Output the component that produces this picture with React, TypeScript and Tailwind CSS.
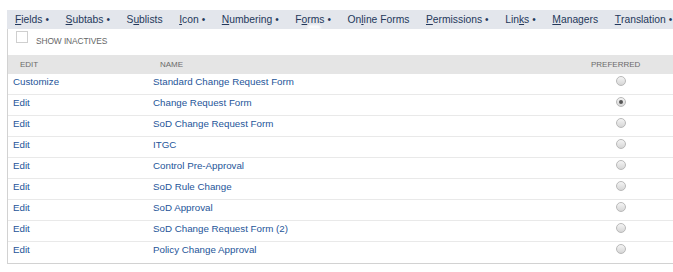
import type { ReactNode } from 'react'

type Tab = {
  label: string
  key: number
  dot: boolean
  active?: boolean
}

const tabs: Tab[] = [
  { label: 'Fields', key: 0, dot: true },
  { label: 'Subtabs', key: 0, dot: true },
  { label: 'Sublists', key: 1, dot: false },
  { label: 'Icon', key: 0, dot: true },
  { label: 'Numbering', key: 0, dot: true },
  { label: 'Forms', key: 1, dot: true, active: true },
  { label: 'Online Forms', key: 2, dot: false },
  { label: 'Permissions', key: 0, dot: true },
  { label: 'Links', key: 3, dot: true },
  { label: 'Managers', key: 0, dot: false },
  { label: 'Translation', key: 0, dot: true },
]

const forms = [
  { action: 'Customize', name: 'Standard Change Request Form', preferred: false },
  { action: 'Edit', name: 'Change Request Form', preferred: true },
  { action: 'Edit', name: 'SoD Change Request Form', preferred: false },
  { action: 'Edit', name: 'ITGC', preferred: false },
  { action: 'Edit', name: 'Control Pre-Approval', preferred: false },
  { action: 'Edit', name: 'SoD Rule Change', preferred: false },
  { action: 'Edit', name: 'SoD Approval', preferred: false },
  { action: 'Edit', name: 'SoD Change Request Form (2)', preferred: false },
  { action: 'Edit', name: 'Policy Change Approval', preferred: false },
]

function TabLabel({ tab }: { tab: Tab }) {
  const before = tab.label.slice(0, tab.key)
  const letter = tab.label.charAt(tab.key)
  const after = tab.label.slice(tab.key + 1)

  return (
    <span className="relative flex h-full items-center whitespace-nowrap">
      {before}
      <span className="underline underline-offset-[1px]">{letter}</span>
      {after}
      {tab.dot && <span className="ml-[3px] text-[10px]">•</span>}
      {tab.active && (
        <span className="absolute bottom-0 left-[12px] h-[4px] w-[14px] rounded-t-full bg-white/90 blur-[1px]" />
      )}
    </span>
  )
}

function Radio({ checked }: { checked: boolean }) {
  return (
    <span className="flex h-[10px] w-[10px] items-center justify-center rounded-full border border-[#b9b9b9] bg-gradient-to-b from-[#f4f4f4] to-[#d6d6d6]">
      {checked && <span className="h-[4px] w-[4px] rounded-full bg-[#555]" />}
    </span>
  )
}

function Cell({ children, className = '' }: { children: ReactNode; className?: string }) {
  return <div className={`pt-[1.5px] leading-[12px] ${className}`}>{children}</div>
}

export default function App() {
  return (
    <div className="h-[272px] w-[673px] overflow-hidden bg-white pt-[10px] font-['Liberation_Sans',Arial,sans-serif]">
      <nav className="ml-[7px] flex h-[19px] items-center gap-[16.6px] bg-[#e3e6ec] pl-[8px] text-[10.3px] text-[#24385b]">
        {tabs.map((tab) => (
          <TabLabel key={tab.label} tab={tab} />
        ))}
      </nav>

      <div className="ml-[7px] border-b border-l border-[#d2d2d2]">
        <label className="flex h-[26px] items-start gap-[8px] pl-[8px] pt-[2px] text-[8.4px] text-[#666]">
          <span className="h-[12px] w-[12px] border border-[#cfcfcf] bg-white" />
          <span className="mt-[3.5px] tracking-[-0.1px]">SHOW INACTIVES</span>
        </label>

        <div className="grid grid-cols-[140px_431px_1fr]">
          <div className="flex h-[19px] items-center bg-[#e5e5e5] pl-[12px] text-[8px] text-[#6b6b6b]">EDIT</div>
          <div className="flex h-[19px] items-center bg-[#e5e5e5] pl-[12px] text-[8px] text-[#6b6b6b]">NAME</div>
          <div className="flex h-[19px] items-center bg-[#e5e5e5] pl-[12px] text-[8px] text-[#6b6b6b]">PREFERRED</div>
        </div>

        {forms.map((form, i) => (
          <div
            key={form.name}
            className={`grid h-[21px] grid-cols-[140px_431px_1fr] text-[9.75px] text-[#255599] ${
              i < forms.length - 1 ? 'border-b border-[#e9e9e9]' : ''
            }`}
          >
            <Cell className="pl-[5px]">{form.action}</Cell>
            <Cell className="pl-[5px]">{form.name}</Cell>
            <div className="pl-[37px] pt-[2px]">
              <Radio checked={form.preferred} />
            </div>
          </div>
        ))}
      </div>
    </div>
  )
}
